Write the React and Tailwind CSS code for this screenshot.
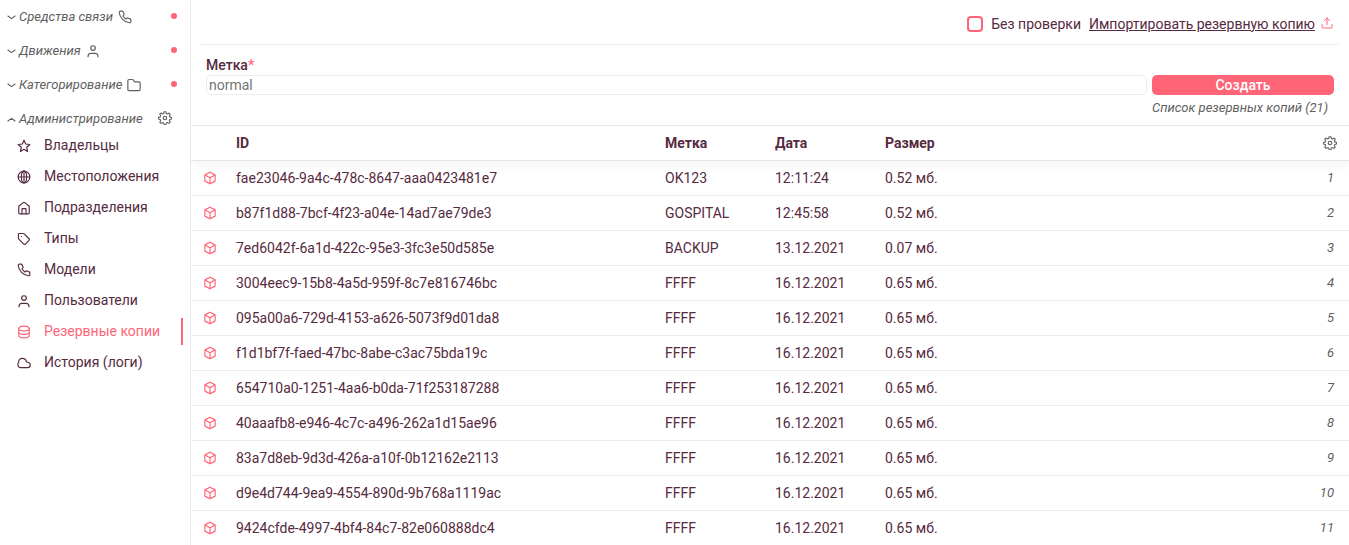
import React from "react";

const PATHS = {
  phone: (
    <path d="M22 16.900v3a2 2 0 0 1-2.200 2A19.800 19.800 0 0 1 2.100 4.200 2 2 0 0 1 4.100 2h3a2 2 0 0 1 1.700 1l1.500 3.700a2 2 0 0 1-.5 2.100L8.500 10.300a16 16 0 0 0 5.300 5.200l1.400-1.300a2 2 0 0 1 2.100-.4l3.500 1.400a2 2 0 0 1 1.200 1.700z" />
  ),
  person: (
    <>
      <circle cx="12" cy="7" r="4" />
      <path d="M3.500 22v-1a5 5 0 0 1 5-5h7a5 5 0 0 1 5 5v1" />
    </>
  ),
  folder: (
    <path d="M1.500 19.500v-15a2 2 0 0 1 2-2h5.500a2 2 0 0 1 1.600.8L12.400 5.700a2 2 0 0 0 1.600.8h6.500a2 2 0 0 1 2 2v11a2 2 0 0 1-2 2h-17a2 2 0 0 1-2-2z" />
  ),
  gear: (
    <>
      <circle cx="12" cy="12" r="3" />
      <path d="M10.500 1h3l1 3.200 1.800.8 3-1.600 2.100 2.100-1.600 3 .8 1.800 3.200 1v2.800l-3.200 1-.8 1.800 1.600 3-2.100 2.100-3-1.600-1.800.8-1 3.200h-3l-1-3.200-1.800-.8-3 1.600-2.100-2.100 1.600-3-.8-1.800-3.200-1v-2.800l3.200-1 .8-1.800-1.600-3 2.100-2.100 3 1.600 1.800-.8z" transform="translate(.6 .3) scale(.95)" />
    </>
  ),
  star: <path d="M12 2l2.900 6.600 7.100.8-5.300 4.800 1.500 7.100L12 17.700l-6.200 3.600 1.500-7.100L2 9.400l7.100-.8z" />,
  globe: (
    <>
      <circle cx="12" cy="12" r="10" />
      <ellipse cx="12" cy="12" rx="4.500" ry="10" />
      <path d="M2 12h20M12 2v20" />
    </>
  ),
  home: (
    <>
      <path d="M3 20V10.500a3 3 0 0 1 1.100-2.300l6-5a3 3 0 0 1 3.800 0l6 5a3 3 0 0 1 1.100 2.300V20a2 2 0 0 1-2 2H5a2 2 0 0 1-2-2z" />
      <path d="M8.500 22v-8a1 1 0 0 1 1-1h5a1 1 0 0 1 1 1v8" />
    </>
  ),
  tag: (
    <>
      <path d="M2.500 10.800V3.500a1 1 0 0 1 1-1h7.300a2 2 0 0 1 1.400.6l8.500 8.500a2 2 0 0 1 0 2.800l-6.300 6.300a2 2 0 0 1-2.800 0l-8.500-8.500a2 2 0 0 1-.6-1.400z" />
      <path d="M7.500 7.500h.01" />
    </>
  ),
  database: (
    <>
      <ellipse cx="12" cy="6" rx="9" ry="4" />
      <path d="M3 6v12c0 2.200 4 4 9 4s9-1.800 9-4V6M3 12c0 2.200 4 4 9 4s9-1.800 9-4" />
    </>
  ),
  cloud: <path d="M6.500 20h11.800a4.700 4.700 0 0 0 .6-9.300l-2.700-.6C15.600 6.500 13 4 9.200 4 5 4 2.600 7 3 10.800c-3.200 3.200-1 9.200 3.500 9.200z" />,
  box: (
    <path d="M12 2l8 4.200a1.500 1.500 0 0 1 .8 1.300v9a1.500 1.500 0 0 1-.8 1.300L12 22l-8-4.200a1.500 1.500 0 0 1-.8-1.300v-9A1.500 1.500 0 0 1 4 6.200zM3.600 6.800L12 11.500l8.400-4.700M12 11.500V22" />
  ),
  upload: <path d="M12 15V2M7 7l5-5 5 5M2 15v5a2 2 0 0 0 2 2h16a2 2 0 0 0 2-2v-5" />,
  down: <path strokeWidth="3" d="M2.500 8l9.500 7 9.500-7" />,
  up: <path strokeWidth="3" d="M2.500 16l9.500-7 9.500 7" />,
};

function Icon({ name, className }) {
  return (
    <svg
      viewBox="0 0 24 24"
      fill="none"
      stroke="currentColor"
      strokeWidth="2"
      strokeLinecap="round"
      strokeLinejoin="round"
      aria-hidden="true"
      className={`shrink-0 ${className}`}
    >
      {PATHS[name]}
    </svg>
  );
}

const groups = [
  { label: "Средства связи", icon: "phone" },
  { label: "Движения", icon: "person" },
  { label: "Категорирование", icon: "folder" },
];

const links = [
  { label: "Владельцы", icon: "star" },
  { label: "Местоположения", icon: "globe" },
  { label: "Подразделения", icon: "home" },
  { label: "Типы", icon: "tag" },
  { label: "Модели", icon: "phone" },
  { label: "Пользователи", icon: "person" },
  { label: "Резервные копии", icon: "database", active: true },
  { label: "История (логи)", icon: "cloud" },
];

const backups = [
  ["fae23046-9a4c-478c-8647-aaa0423481e7", "OK123", "12:11:24", "0.52 мб."],
  ["b87f1d88-7bcf-4f23-a04e-14ad7ae79de3", "GOSPITAL", "12:45:58", "0.52 мб."],
  ["7ed6042f-6a1d-422c-95e3-3fc3e50d585e", "BACKUP", "13.12.2021", "0.07 мб."],
  ["3004eec9-15b8-4a5d-959f-8c7e816746bc", "FFFF", "16.12.2021", "0.65 мб."],
  ["095a00a6-729d-4153-a626-5073f9d01da8", "FFFF", "16.12.2021", "0.65 мб."],
  ["f1d1bf7f-faed-47bc-8abe-c3ac75bda19c", "FFFF", "16.12.2021", "0.65 мб."],
  ["654710a0-1251-4aa6-b0da-71f253187288", "FFFF", "16.12.2021", "0.65 мб."],
  ["40aaafb8-e946-4c7c-a496-262a1d15ae96", "FFFF", "16.12.2021", "0.65 мб."],
  ["83a7d8eb-9d3d-426a-a10f-0b12162e2113", "FFFF", "16.12.2021", "0.65 мб."],
  ["d9e4d744-9ea9-4554-890d-9b768a1119ac", "FFFF", "16.12.2021", "0.65 мб."],
  ["9424cfde-4997-4bf4-84c7-82e060888dc4", "FFFF", "16.12.2021", "0.65 мб."],
];

function Sidebar() {
  return (
    <nav className="w-[191px] shrink-0 border-r border-[#ececec]">
      {groups.map((g) => (
        <button
          key={g.label}
          type="button"
          className="flex h-[34px] w-full items-center pr-[13px] pl-[7px] text-[13px] text-[#5f5f5f] italic"
        >
          <Icon name="down" className="mr-[3px] size-[9px]" />
          {g.label}
          <Icon name={g.icon} className="ml-[5px] size-[14px]" />
          <span className="mb-[2px] ml-auto size-[6px] rounded-full bg-[#ff6577]" />
        </button>
      ))}
      <button
        type="button"
        className="flex h-[34px] w-full items-center pr-[18px] pl-[7px] text-[13px] text-[#5f5f5f] italic"
      >
        <Icon name="up" className="mr-[3px] size-[9px]" />
        Администрирование
        <Icon name="gear" className="mb-[2px] ml-auto size-[14px]" />
      </button>
      <ul className="-mt-1.5 pr-[7px]">
        {links.map((l) => (
          <li key={l.label} className="flex h-[31px] items-center">
            <a
              href="#"
              aria-current={l.active ? "page" : undefined}
              className={
                l.active
                  ? "flex h-[27px] flex-1 items-center border-r-2 border-[#ff6577] pl-[17px] text-[#ff6577]"
                  : "flex h-[27px] flex-1 items-center pl-[17px]"
              }
            >
              <Icon name={l.icon} className="mr-[13px] size-[14px]" />
              <span className="pb-[2px]">{l.label}</span>
            </a>
          </li>
        ))}
      </ul>
    </nav>
  );
}

export default function App() {
  return (
    <div className="flex h-screen overflow-hidden bg-white font-['Roboto',sans-serif] text-[14px] leading-5 text-[#562a40]">
      <Sidebar />
      <main className="min-w-0 flex-1">
        <header className="mx-[10px] flex h-[45px] items-center justify-end border-b border-[#ececec] pt-[3px] pr-[6px]">
          <label className="flex items-center gap-2">
            <input
              type="checkbox"
              className="size-4 appearance-none rounded-[4px] border-2 border-[#ff6577] bg-white checked:bg-[#ff6577]"
            />
            Без проверки
          </label>
          <a href="#" className="ml-2 flex items-center gap-[6px]">
            <span className="underline">Импортировать резервную копию</span>
            <Icon name="upload" className="mb-[2px] size-3 text-[#ff6577]" />
          </a>
        </header>

        <form className="grid grid-cols-[1fr_182px] gap-x-[5px] px-[15px] pt-[10px] pb-[7px]">
          <label htmlFor="backup-label" className="col-span-2 font-medium">
            Метка<span className="text-[#ff6577]">*</span>
          </label>
          <input
            id="backup-label"
            type="text"
            placeholder="normal"
            className="h-5 rounded-[5px] border border-[#ececec] px-[2px] placeholder:text-[#757575]"
          />
          <button type="button" className="h-5 rounded-[5px] bg-[#ff6577] font-medium text-white">
            Создать
          </button>
          <p className="col-start-2 pt-[3px] text-[13px] text-[#5f5f5f] italic">
            Список резервных копий (21)
          </p>
        </form>

        <table className="w-full table-fixed border-separate border-spacing-0 text-left">
          <thead className="shadow-[0_8px_10px_-2px_rgba(0,0,0,0.04)]">
            <tr className="h-9 *:border-y *:border-[#e6e6e6] *:px-[5px] *:py-0 *:font-bold">
              <th className="w-10" />
              <th className="w-[429px]">ID</th>
              <th className="w-[110px]">Метка</th>
              <th className="w-[110px]">Дата</th>
              <th className="w-[110px]">Размер</th>
              <th>
                <button
                  type="button"
                  aria-label="Настройки"
                  className="ml-auto mr-[7px] block text-[#5f5f5f]"
                >
                  <Icon name="gear" className="size-[14px]" />
                </button>
              </th>
            </tr>
          </thead>
          <tbody>
            {backups.map(([id, label, date, size], i) => (
              <tr key={id} className="h-[35px] *:border-b *:border-[#ececec] *:px-[5px] *:py-0">
                <td>
                  <Icon name="box" className="ml-[7px] size-[14px] text-[#ff6577]" />
                </td>
                <td>{id}</td>
                <td>{label}</td>
                <td>{date}</td>
                <td>{size}</td>
                <td className="text-right text-[13px] text-[#5f5f5f] italic">
                  <span className="mr-[10px]">{i + 1}</span>
                </td>
              </tr>
            ))}
          </tbody>
        </table>
      </main>
    </div>
  );
}
